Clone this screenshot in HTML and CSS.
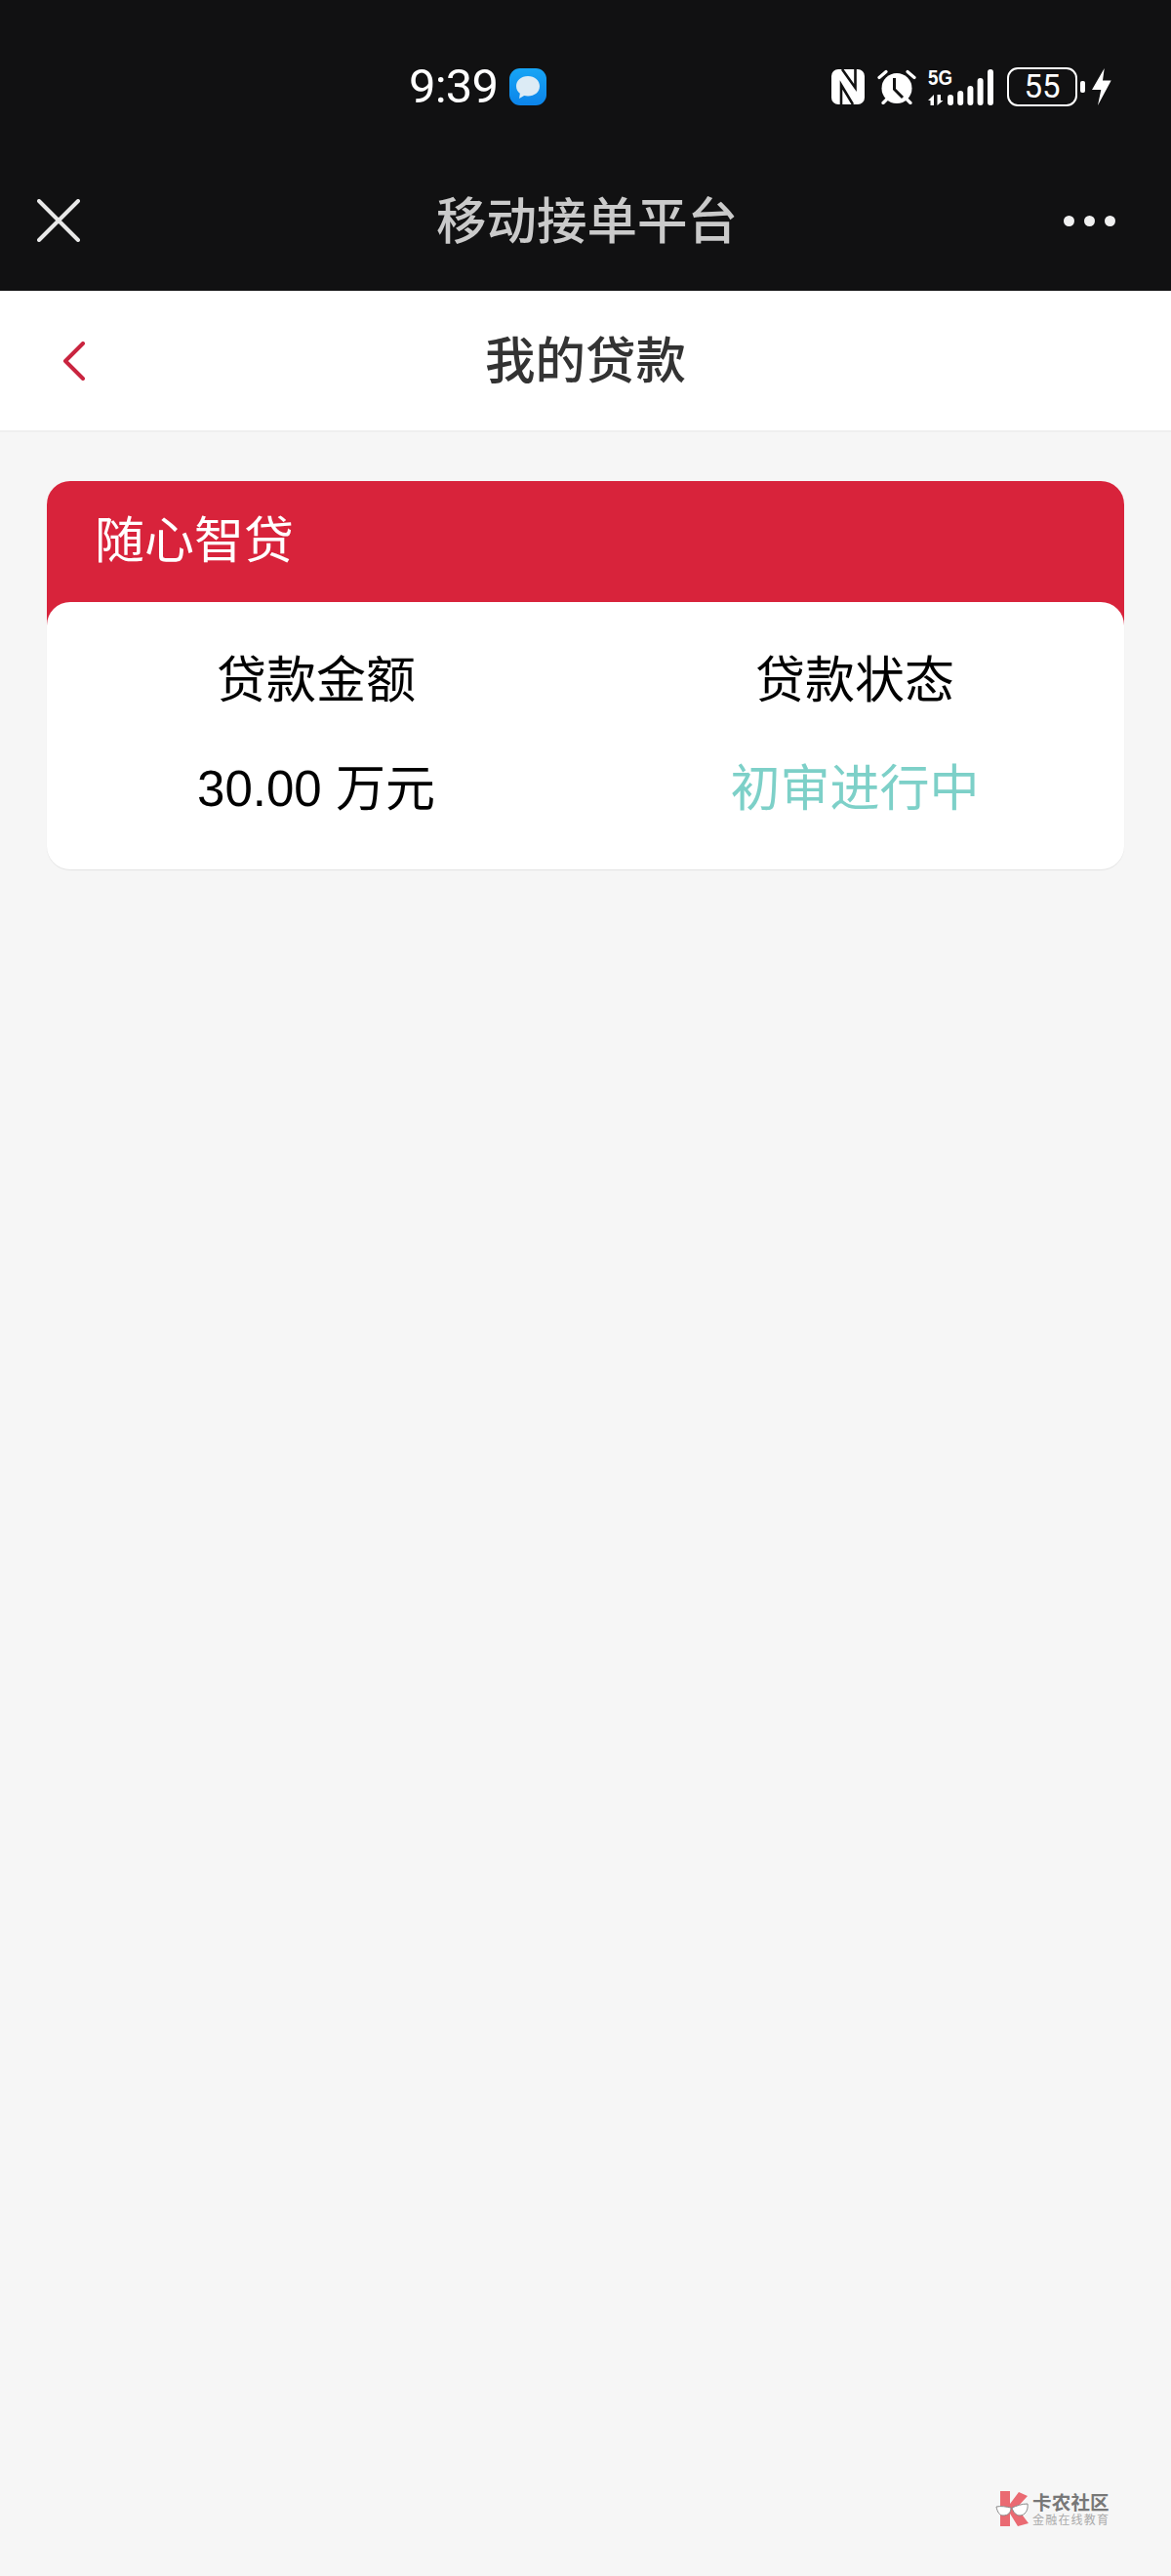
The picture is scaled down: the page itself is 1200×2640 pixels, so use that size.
FILE: index.html
```html
<!DOCTYPE html>
<html lang="zh-CN">
<head>
<meta charset="utf-8">
<title>我的贷款</title>
<link rel="stylesheet" href="styles.css">
</head>
<body>
<div class="page">
  <header class="top-dark">
    <div class="status-bar">
      <div class="clock-group">
        <span class="clock">9:39</span>
        <svg class="msg-icon" viewBox="0 0 38 38">
          <defs>
            <linearGradient id="msgBg" x1="0" y1="0" x2="0" y2="1"><stop offset="0" stop-color="#17a5f5"/><stop offset="1" stop-color="#0c84ea"/></linearGradient>
          </defs>
          <rect width="38" height="38" rx="11" fill="url(#msgBg)"/>
          <path d="M19 8c7 0 12 4.400 12 10.300 0 6-5.200 10.300-12 10.300-1.400 0-2.700-.2-3.900-.5l-5 2.900.7-5.200C8.400 24 7 21.300 7 18.300 7 12.400 12 8 19 8z" fill="#dcebf5"/>
        </svg>
      </div>
      <div class="status-icons">
        <svg class="nfc" viewBox="0 0 34 36">
          <rect width="34" height="36" rx="7" fill="#fff"/>
          <path d="M11 0 24.500 19V0M10 36V16L22 36" stroke="#111" stroke-width="2.600" fill="none"/>
        </svg>
        <svg class="alarm" viewBox="0 0 40 36">
          <path d="M2 8.500 9 2.500M38 8.500 31 2.500M6 34.500l4-4M34 34.500l-4-4" stroke="#fff" stroke-width="3.200" stroke-linecap="round" fill="none"/>
          <circle cx="20" cy="19.500" r="15.500" fill="#fff"/>
          <path d="M17.500 9v11.500l8.500 8.500" stroke="#111" stroke-width="3" fill="none"/>
        </svg>
        <div class="net">
          <div class="net-labels">
            <span class="fiveg">5G</span>
            <svg class="updown" viewBox="0 0 16 11">
              <path d="M6 0 0 6h2.500v5H6zM9.500 0v11l6-5H13V0z" fill="#fff"/>
            </svg>
          </div>
          <svg class="signal" viewBox="0 0 47 37">
            <rect x="0" y="26" width="6" height="11" rx="3" fill="#fff"/>
            <rect x="10.200" y="22" width="6" height="15" rx="3" fill="#fff"/>
            <rect x="20.400" y="17" width="6" height="20" rx="3" fill="#fff"/>
            <rect x="30.600" y="9" width="6" height="28" rx="3" fill="#fff"/>
            <rect x="41" y="0" width="6" height="37" rx="3" fill="#fff"/>
          </svg>
        </div>
        <div class="battery">
          <span class="battery-body">55</span>
          <span class="battery-tip"></span>
        </div>
        <svg class="bolt" viewBox="0 0 20 38">
          <path d="M12.700 0 0 22h9.300L6 38 19.700 12.500H11z" fill="#fff"/>
        </svg>
      </div>
    </div>
    <div class="app-bar">
      <svg class="close-icon" viewBox="0 0 44 44">
        <path d="M2 2l40 40M42 2 2 42" stroke="#e8e8e8" stroke-width="4" stroke-linecap="round" fill="none"/>
      </svg>
      <h1 class="app-title">移动接单平台</h1>
      <div class="dots"><i></i><i></i><i></i></div>
    </div>
  </header>

  <nav class="page-nav">
    <svg class="back-icon" viewBox="0 0 24 40">
      <path d="M21 2 3 20l18 18" stroke="#c9243f" stroke-width="4" stroke-linecap="round" stroke-linejoin="round" fill="none"/>
    </svg>
    <h2 class="page-title">我的贷款</h2>
  </nav>

  <main class="content">
    <section class="loan-card">
      <div class="card-head">随心智贷</div>
      <div class="card-body">
        <div class="col">
          <div class="label">贷款金额</div>
          <div class="value">30.00 万元</div>
        </div>
        <div class="col">
          <div class="label">贷款状态</div>
          <div class="value status">初审进行中</div>
        </div>
      </div>
    </section>
  </main>

  <div class="watermark">
    <svg class="wm-logo" viewBox="0 0 34 36">
      <path d="M5 0h10v13L24 1l9 4-11 12 12 16-11 3-8-13v13H5z" fill="#ea6a72"/>
      <path d="M1 16c5-1 10 0 15 1 0 5-3 8-8 8-4 0-6-4-7-9z" fill="#fff" stroke="#8a8a8a" stroke-width="1"/>
      <path d="M17 17c5-2 10-4 16-4 1 7-3 12-8 12-4 0-7-4-8-8z" fill="#fff" stroke="#8a8a8a" stroke-width="1"/>
    </svg>
    <div class="wm-text">
      <div class="wm-name">卡农社区</div>
      <div class="wm-sub">金融在线教育</div>
    </div>
  </div>
</div>
</body>
</html>
```

FILE: styles.css
```css
* { box-sizing: border-box; }
html, body { margin: 0; padding: 0; }
body {
  font-family: "Noto Sans CJK SC", "Noto Sans", sans-serif;
  background: #f6f6f6;
}
.page {
  position: relative;
  width: 1200px;
  height: 2640px;
  background: #f6f6f6;
  overflow: hidden;
}
.top-dark {
  height: 298px;
  background: #111112;
  display: flex;
  flex-direction: column;
}
.status-bar {
  height: 178px;
  flex: none;
  display: flex;
  align-items: center;
  padding: 0 61px 0 419px;
}
.clock-group {
  display: flex;
  align-items: center;
  gap: 12px;
}
.clock {
  font-family: Roboto, sans-serif;
  font-size: 49px;
  line-height: 56px;
  color: #fff;
  letter-spacing: -0.8px;
}
.msg-icon { width: 38px; height: 38px; }
.status-icons {
  margin-left: auto;
  display: flex;
  align-items: center;
}
.nfc { width: 34px; height: 36px; margin-right: 13px; }
.alarm { width: 40px; height: 36px; margin-right: 12px; }
.net { display: flex; align-items: flex-end; height: 37px; }
.net-labels { display: flex; flex-direction: column; width: 25px; }
.fiveg {
  font-family: "Liberation Sans", sans-serif;
  font-weight: 700;
  font-size: 22px;
  line-height: 18px;
  color: #fff;
  transform: scaleX(.85);
  transform-origin: left;
  white-space: nowrap;
}
.updown { width: 16px; height: 11px; margin-top: 8px; }
.signal { width: 47px; height: 37px; margin-left: -5px; }
.battery { display: flex; align-items: center; margin-left: 14px; }
.battery-body {
  width: 72px;
  height: 40px;
  border: 2.500px solid #fff;
  border-radius: 11px;
  color: #fff;
  font-family: Roboto, sans-serif;
  font-size: 33px;
  line-height: 35px;
  text-align: center;
}
.battery-tip {
  width: 5px;
  height: 12px;
  background: #fff;
  border-radius: 2px;
  margin-left: 3px;
}
.bolt { width: 20px; height: 38px; margin-left: 7px; }
.app-bar {
  flex: 1;
  display: grid;
  grid-template-columns: 1fr auto 1fr;
  align-items: center;
  padding: 0 57px 24px 38px;
}
.close-icon { width: 44px; height: 44px; margin-right: auto; }
.app-title {
  margin: 0 -11px 6px 11px;
  font-size: 51.500px;
  line-height: 70px;
  font-weight: 500;
  color: #cacaca;
  text-align: center;
}
.dots { display: flex; gap: 10px; justify-self: end; }
.dots i { width: 11px; height: 11px; border-radius: 50%; background: #f0f0f0; }
.page-nav {
  height: 145px;
  background: #fff;
  border-bottom: 2px solid #efefef;
  display: grid;
  grid-template-columns: 1fr auto 1fr;
  align-items: center;
  padding: 0 64px;
}
.back-icon { width: 24px; height: 40px; }
.page-title {
  margin: 0 0 8px;
  font-size: 51.500px;
  line-height: 70px;
  font-weight: 500;
  color: #333;
}
.content { padding: 50px 48px 0; }
.card-head {
  height: 148px;
  padding: 22px 0 0 49px;
  background: #d8233b;
  border-radius: 24px 24px 0 0;
  font-size: 51px;
  line-height: 70px;
  color: #fff;
}
.card-body {
  height: 274px;
  margin-top: -24px;
  position: relative;
  background: #fff;
  border-radius: 24px;
  display: grid;
  grid-template-columns: 1fr 1fr;
  box-shadow: 0 1px 1px rgba(0,0,0,.08);
}
.col { text-align: center; padding-top: 41px; }
.label {
  font-size: 51px;
  line-height: 70px;
  color: #000;
}
.value {
  margin-top: 46px;
  font-size: 51px;
  line-height: 70px;
  color: #000;
  font-family: "Liberation Sans", "Noto Sans CJK SC", sans-serif;
}
.value.status { color: #7dd0c8; }
.watermark {
  position: absolute;
  left: 1020px;
  top: 2553px;
  display: flex;
  align-items: center;
  gap: 4px;
}
.wm-logo { width: 34px; height: 36px; }
.wm-text { display: flex; flex-direction: column; }
.wm-name {
  font-size: 19.500px;
  line-height: 21px;
  font-weight: 700;
  color: #777;
  letter-spacing: .2px;
}
.wm-sub {
  font-size: 12px;
  line-height: 15px;
  color: #aaa;
  letter-spacing: 1.200px;
}
```
